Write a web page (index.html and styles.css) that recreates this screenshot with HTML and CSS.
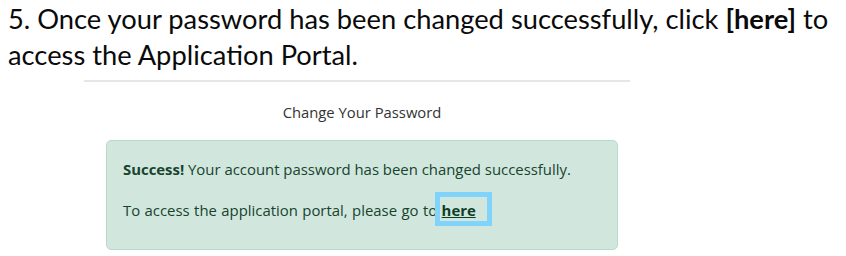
FILE: index.html
```html
<!DOCTYPE html>
<html lang="en">
<head>
<meta charset="utf-8">
<title>Change Your Password</title>
<link rel="stylesheet" href="styles.css">
</head>
<body>
<p class="step">5. Once your password has been changed successfully, click <b>[here]</b> to access the Application Portal.</p>
<section class="panel">
  <h2 class="panel-title">Change Your Password</h2>
  <div class="alert">
    <p class="alert-line"><strong>Success!</strong> Your account password has been changed successfully.</p>
    <p class="alert-line alert-line-link">To access the application portal, please go to <span class="link-wrap"><a class="alert-link" href="#">here</a><span class="highlight"></span></span></p>
  </div>
</section>
</body>
</html>
```

FILE: styles.css
```css
html, body {
  margin: 0;
  padding: 0;
  background: #ffffff;
}

.step {
  margin: 0;
  padding: 1px 0 0 8px;
  font-family: "Lato", "Open Sans", sans-serif;
  font-size: 27.3px;
  line-height: 36px;
  color: #0a0a0a;
  width: 836px;
}

.step b {
  font-weight: 700;
}

.panel {
  margin: 7px 0 0 84px;
  width: 546px;
  border-top: 2px solid #e6e6e6;
  font-family: "Open Sans", "Noto Sans", sans-serif;
}

.panel-title {
  margin: 0;
  padding: 20px 0 0 10px;
  text-align: center;
  font-size: 14.8px;
  font-weight: 400;
  line-height: 20px;
  color: #333333;
}

.alert {
  margin: 18px 0 0 22px;
  width: 510px;
  height: 108px;
  box-sizing: content-box;
  background: #d1e7dd;
  border: 1px solid #badbcc;
  border-radius: 5px;
  color: #17432f;
  font-size: 14.9px;
}

.alert-line {
  margin: 0;
  padding: 0 0 0 16px;
  line-height: 20px;
}

.alert-line:first-child {
  padding-top: 18px;
}

.alert-line + .alert-line {
  margin-top: 21px;
}

.alert-line-link {
  word-spacing: 0.55px;
}

.alert-line strong {
  font-weight: 700;
}

.link-wrap {
  position: relative;
}

.alert-link {
  color: #0f3d28;
  font-weight: 700;
  text-decoration: underline;
}

.highlight {
  position: absolute;
  left: -7px;
  top: -8px;
  width: 47px;
  height: 24px;
  border: 5px solid #80d3fb;
}
```
